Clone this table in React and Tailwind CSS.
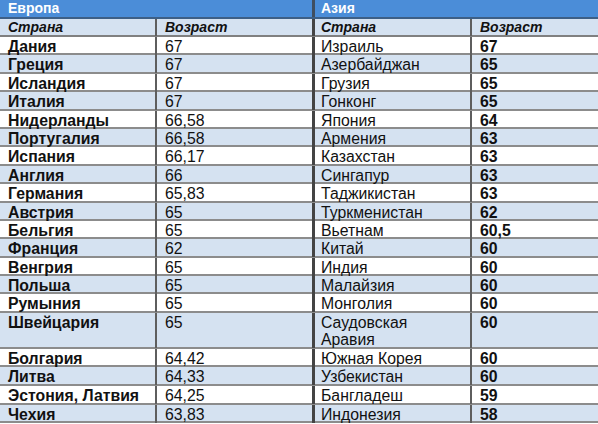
import React from "react";

const europe = [
  ["Дания", "67"],
  ["Греция", "67"],
  ["Исландия", "67"],
  ["Италия", "67"],
  ["Нидерланды", "66,58"],
  ["Португалия", "66,58"],
  ["Испания", "66,17"],
  ["Англия", "66"],
  ["Германия", "65,83"],
  ["Австрия", "65"],
  ["Бельгия", "65"],
  ["Франция", "62"],
  ["Венгрия", "65"],
  ["Польша", "65"],
  ["Румыния", "65"],
  ["Швейцария", "65"],
  ["Болгария", "64,42"],
  ["Литва", "64,33"],
  ["Эстония, Латвия", "64,25"],
  ["Чехия", "63,83"],
];

const asia = [
  ["Израиль", "67"],
  ["Азербайджан", "65"],
  ["Грузия", "65"],
  ["Гонконг", "65"],
  ["Япония", "64"],
  ["Армения", "63"],
  ["Казахстан", "63"],
  ["Сингапур", "63"],
  ["Таджикистан", "63"],
  ["Туркменистан", "62"],
  ["Вьетнам", "60,5"],
  ["Китай", "60"],
  ["Индия", "60"],
  ["Малайзия", "60"],
  ["Монголия", "60"],
  ["Саудовская Аравия", "60"],
  ["Южная Корея", "60"],
  ["Узбекистан", "60"],
  ["Бангладеш", "59"],
  ["Индонезия", "58"],
];

const cols = "grid grid-cols-[157px_158px_157px_126px]";

const App = () => {
  return (
    <div
      className="w-[598px] h-[424px] overflow-hidden bg-white text-[#111]"
      style={{ fontFamily: '"Liberation Sans", Arial, sans-serif' }}
    >
      {/* region headers */}
      <div className={`${cols} h-[18.5px] bg-[#4b8dd8] border-b-2 border-[#3d5f86] text-white font-bold text-[14px] leading-[16px]`}>
        <div className="col-span-2 pl-2 border-r-[3px] border-[#3f4e60]">Европа</div>
        <div className="col-span-2 pl-[6px]">Азия</div>
      </div>

      {/* column headers */}
      <div className={`${cols} h-[18.5px] bg-[#d5e2f1] border-b-2 border-[#808080] italic font-bold text-[14px] leading-[17px]`}>
        <div className="pl-2 border-r-2 border-[#5e5e5e]">Страна</div>
        <div className="pl-2 border-r-[3px] border-[#444]">Возраст</div>
        <div className="pl-[6px] border-r-2 border-[#5e5e5e]">Страна</div>
        <div className="pl-2">Возраст</div>
      </div>

      {europe.map(([country, age], i) => {
        const tall = i === 15;
        const late = i > 15;
        const [aCountry, aAge] = asia[i];
        return (
          <div
            key={country}
            className={`${cols} border-b-2 border-[#8c8c8c] text-[15.8px] leading-[17px] ${
              tall ? "h-[36px]" : late ? "h-[18.6px]" : "h-[18.4px]"
            } ${i % 2 === 1 ? "bg-[#d5e2f1]" : "bg-white"}`}
          >
            <div className="pl-2 pt-px font-bold border-r-2 border-[#5e5e5e] whitespace-nowrap">{country}</div>
            <div className="pl-2 pt-px border-r-[3px] border-[#444]">{age}</div>
            <div className="pl-[6px] pt-px border-r-2 border-[#5e5e5e]">
              {tall ? (
                <>
                  Саудовская
                  <br />
                  Аравия
                </>
              ) : (
                aCountry
              )}
            </div>
            <div className="pl-2 pt-px font-bold">{aAge}</div>
          </div>
        );
      })}
    </div>
  );
};

export default App;
